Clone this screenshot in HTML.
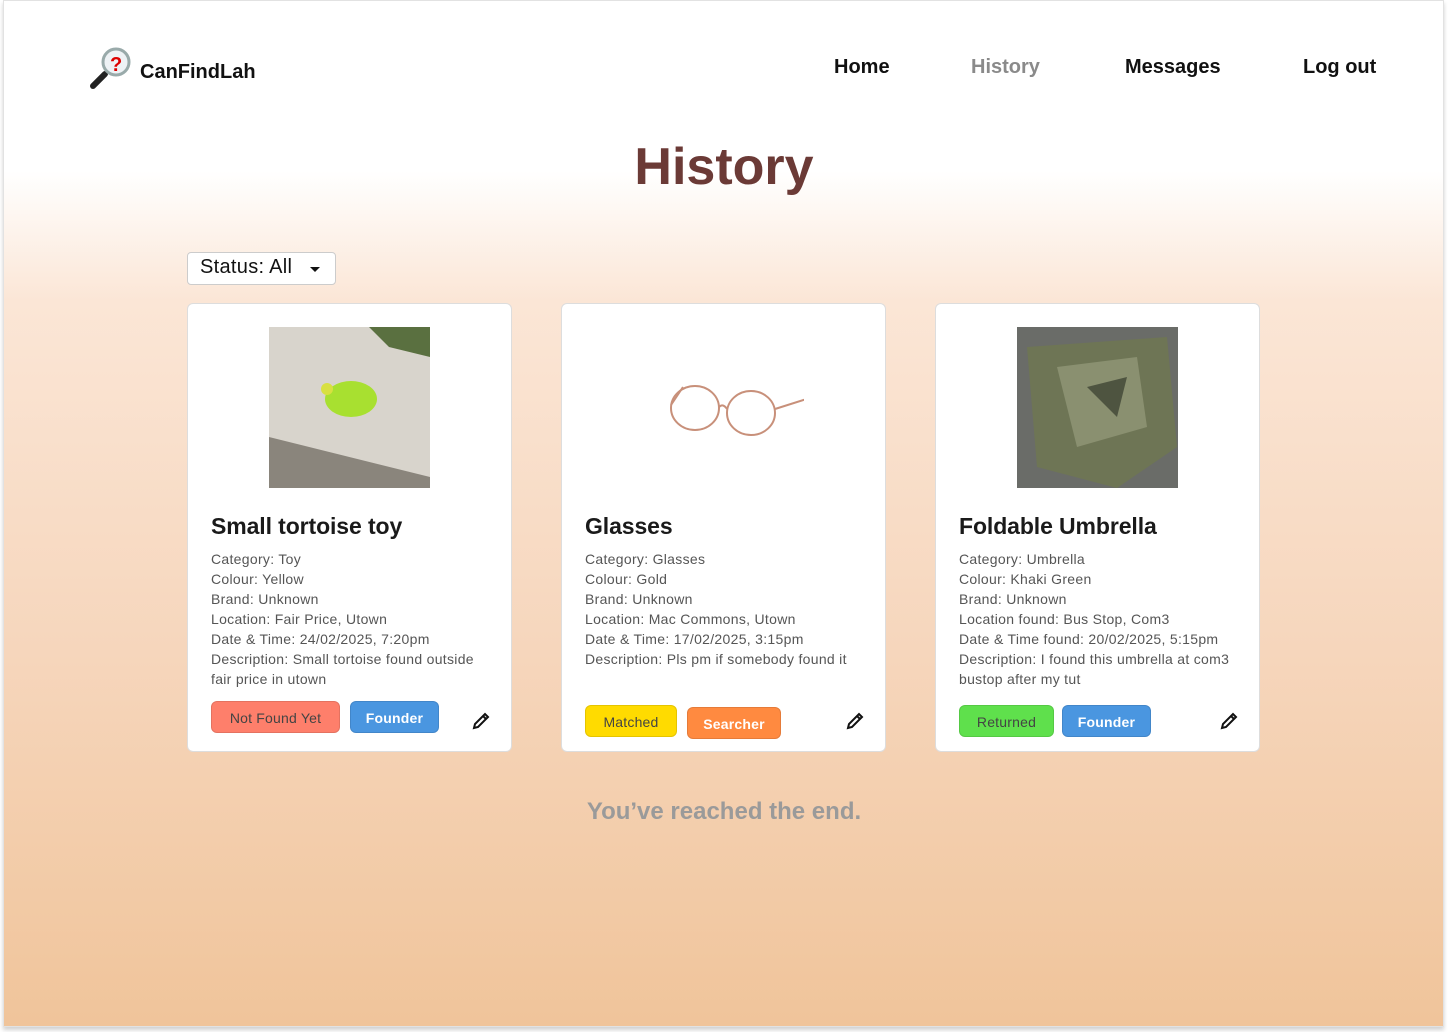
<!DOCTYPE html>
<html><head><meta charset="utf-8"><style>
*{box-sizing:border-box;margin:0;padding:0}
body{width:1448px;height:1032px;background:#fff;font-family:"Liberation Sans",sans-serif;position:relative;overflow:hidden}
.frame{position:absolute;left:3px;top:0;width:1441px;height:1027px;background:linear-gradient(to bottom,#fff 0px,#fff 170px,#fbe6d6 300px,#f6d6bc 650px,#f0c49a 1027px);border:1px solid #e2e2e2;box-shadow:0 3px 4px rgba(0,0,0,.18)}
.logo{position:absolute;left:88px;top:46px;display:flex;align-items:center}
.logo span{font-weight:bold;font-size:20px;color:#111;margin-left:8px;margin-top:8px}
.nav a{position:absolute;top:56px;font-weight:bold;font-size:20px;color:#111;text-decoration:none}
h1{position:absolute;left:0;width:1448px;top:137px;text-align:center;font-size:52px;color:#6b3a36;font-weight:bold}
.sel{position:absolute;left:187px;top:252px;width:149px;height:33px;border:1px solid #ccc;border-radius:4px;background:#fff;font-size:20px;padding:3px 0 0 12px;color:#111;letter-spacing:.3px}
.sel:after{content:"";position:absolute;left:122px;top:14px;border:5px solid transparent;border-top:5px solid #111}
.card{position:absolute;top:303px;width:325px;height:449px;background:#fff;border:1px solid #ddd;border-radius:6px}
.img{position:absolute;left:81px;top:23px;width:161px;height:161px;overflow:hidden}
.card h2{position:absolute;left:23px;top:209px;font-size:23px;font-weight:bold;color:#1a1a1a;letter-spacing:-.1px}
.card p{position:absolute;left:23px;top:245px;font-size:14px;line-height:20px;color:#555;width:272px;letter-spacing:.3px}
.b{position:absolute;height:32px;border-radius:6px;font-size:14px;text-align:center;line-height:32px;border:1px solid rgba(0,0,0,.1);letter-spacing:.2px}
.w{font-weight:bold}
.pen{position:absolute;right:20px}
.end{position:absolute;left:0;width:1448px;top:798px;text-align:center;font-size:24px;color:#9a9a9a;font-weight:bold}
</style></head><body>
<div class="frame"></div>
<div class="logo">
<svg width="44" height="44" viewBox="0 0 44 44"><line x1="5" y1="40" x2="17" y2="28" stroke="#222" stroke-width="6" stroke-linecap="round"/><circle cx="28" cy="16" r="13" fill="#eef2f5" stroke="#9aa" stroke-width="3"/><text x="22" y="25" font-size="20" font-weight="bold" fill="#d00" font-family="Liberation Sans">?</text></svg>
<span>CanFindLah</span></div>
<div class="nav"><a style="left:834px">Home</a><a style="left:971px;color:#8a8a8a">History</a><a style="left:1125px">Messages</a><a style="left:1303px">Log out</a></div>
<h1>History</h1>
<div class="sel">Status: All</div>

<div class="card" style="left:187px">
<div class="img"><svg width="161" height="161"><rect width="161" height="161" fill="#d8d4cc"/><polygon points="100,0 161,0 161,30 120,20" fill="#5a7040"/><polygon points="0,110 161,150 161,161 0,161" fill="#8a857c"/><ellipse cx="82" cy="72" rx="26" ry="18" fill="#a8e030"/><circle cx="58" cy="62" r="6" fill="#d8e040"/></svg></div>
<h2>Small tortoise toy</h2>
<p>Category: Toy<br>Colour: Yellow<br>Brand: Unknown<br>Location: Fair Price, Utown<br>Date &amp; Time: 24/02/2025, 7:20pm<br>Description: Small tortoise found outside fair price in utown</p>
<div class="b" style="left:23px;top:397px;width:129px;background:#fe7f6b;color:#444">Not Found Yet</div>
<div class="b w" style="left:162px;top:397px;width:89px;background:#4a96e0;color:#fff">Founder</div>
<svg class="pen" style="top:407px" width="20" height="20" viewBox="0 0 20 20"><path d="M3 17 L4 13 L14 3 L17 6 L7 16 Z M12 5 L15 8" fill="none" stroke="#111" stroke-width="2"/></svg>
</div>

<div class="card" style="left:561px">
<div class="img"><svg width="161" height="161"><rect width="161" height="161" fill="#fff"/><ellipse cx="52" cy="81" rx="24" ry="22" fill="none" stroke="#c8907a" stroke-width="2"/><ellipse cx="108" cy="86" rx="24" ry="22" fill="none" stroke="#c8907a" stroke-width="2"/><path d="M76 80 Q80 76 84 82 M132 82 L170 70 M28 78 L40 60" fill="none" stroke="#c8907a" stroke-width="2"/></svg></div>
<h2>Glasses</h2>
<p>Category: Glasses<br>Colour: Gold<br>Brand: Unknown<br>Location: Mac Commons, Utown<br>Date &amp; Time: 17/02/2025, 3:15pm<br>Description: Pls pm if somebody found it</p>
<div class="b" style="left:23px;top:401px;width:92px;background:#ffdb00;color:#444">Matched</div>
<div class="b w" style="left:125px;top:403px;width:94px;background:#ff8a40;color:#fff">Searcher</div>
<svg class="pen" style="top:407px" width="20" height="20" viewBox="0 0 20 20"><path d="M3 17 L4 13 L14 3 L17 6 L7 16 Z M12 5 L15 8" fill="none" stroke="#111" stroke-width="2"/></svg>
</div>

<div class="card" style="left:935px">
<div class="img"><svg width="161" height="161"><rect width="161" height="161" fill="#6a6c68"/><polygon points="10,20 150,10 160,120 100,161 20,140" fill="#6e7555"/><polygon points="40,40 120,30 130,100 60,120" fill="#8a9070"/><polygon points="70,60 110,50 100,90" fill="#4e5440"/></svg></div>
<h2>Foldable Umbrella</h2>
<p>Category: Umbrella<br>Colour: Khaki Green<br>Brand: Unknown<br>Location found: Bus Stop, Com3<br>Date &amp; Time found: 20/02/2025, 5:15pm<br>Description: I found this umbrella at com3 bustop after my tut</p>
<div class="b" style="left:23px;top:401px;width:95px;background:#5fe04c;color:#444">Returned</div>
<div class="b w" style="left:126px;top:401px;width:89px;background:#4a96e0;color:#fff">Founder</div>
<svg class="pen" style="top:407px" width="20" height="20" viewBox="0 0 20 20"><path d="M3 17 L4 13 L14 3 L17 6 L7 16 Z M12 5 L15 8" fill="none" stroke="#111" stroke-width="2"/></svg>
</div>

<div class="end">You’ve reached the end.</div>
</body></html>
